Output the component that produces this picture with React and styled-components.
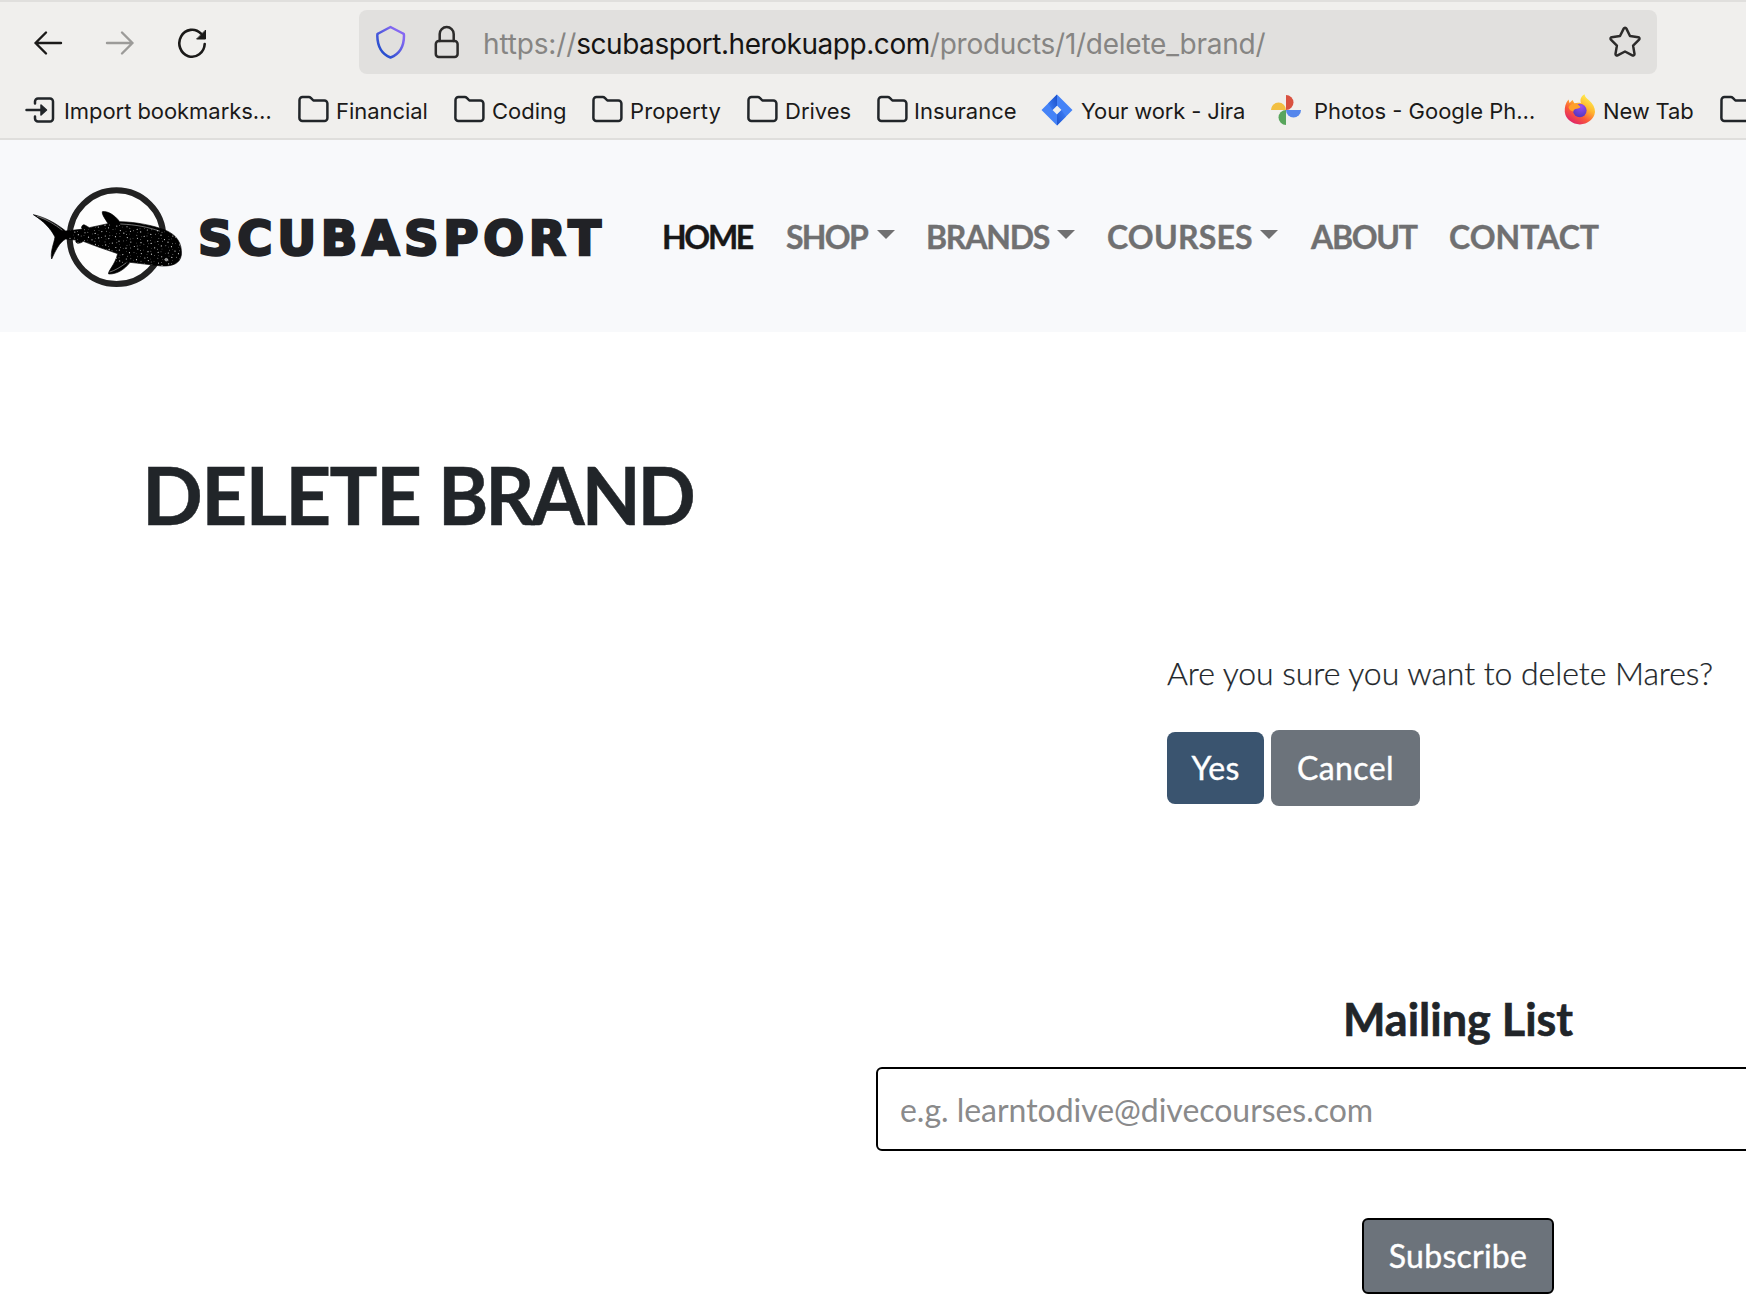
import React from 'react';
import styled, { createGlobalStyle } from 'styled-components';

const Global = createGlobalStyle`
  * { box-sizing: border-box; }
  html, body { margin: 0; padding: 0; background: #fff; overflow: hidden; }
`;

const brandFont = `Lato, "Liberation Sans", sans-serif`;
const uiFont = `Inter, "Liberation Sans", sans-serif`;

const Page = styled.div`
  width: 1746px;
  height: 1312px;
  overflow: hidden;
  background: #fff;
  color: #212529;
  font-family: ${brandFont};
`;

const Chrome = styled.header`
  height: 140px;
  background: #f0efed;
  border-top: 2px solid #e0dfdd;
  border-bottom: 2px solid #dfdedc;
  font-family: ${uiFont};
`;

const Toolbar = styled.div`
  display: flex;
  align-items: center;
  height: 80px;
  padding-left: 32px;
`;

const ToolButton = styled.button`
  display: flex;
  width: 72px;
  padding: 2px 0 0;
  border: 0;
  background: none;
  color: ${(p) => (p.$muted ? '#9c9b99' : '#1b1a19')};
`;

const AddressBar = styled.div`
  display: flex;
  align-items: center;
  width: 1298px;
  height: 64px;
  margin-left: 111px;
  padding: 0 14px;
  border-radius: 8px;
  background: #e1e0de;
`;

const AddressIcon = styled.span`
  display: flex;
  width: ${(p) => p.$w}px;
`;

const Address = styled.span`
  flex: 1;
  padding-top: 3px;
  font-size: 28px;
  line-height: 36px;
  letter-spacing: -0.25px;
  white-space: nowrap;
  color: #868583;
`;

const Scheme = styled.span`
  letter-spacing: -0.15px;
`;

const Domain = styled.span`
  letter-spacing: -0.45px;
  color: #151413;
`;

const Bookmarks = styled.div`
  display: flex;
  align-items: center;
  height: 56px;
  padding-left: 25px;
`;

const Bookmark = styled.div`
  display: flex;
  flex: none;
  align-items: center;
  width: ${(p) => p.$w}px;
`;

const BookmarkIcon = styled.span`
  display: flex;
  flex: none;
  width: ${(p) => p.$w}px;
`;

const BookmarkLabel = styled.span`
  padding-top: 2px;
  font-size: 22px;
  line-height: 28px;
  letter-spacing: ${(p) => p.$track}px;
  white-space: nowrap;
  color: #1b1a19;
`;

const Nav = styled.nav`
  display: flex;
  align-items: flex-start;
  height: 192px;
  padding: 35px 0 0 20px;
  background: #f8f9fb;
`;

const Mark = styled.div`
  display: flex;
  width: 178px;
`;

const Wordmark = styled.div`
  width: 464px;
  padding-top: 33px;
  font-family: "DejaVu Sans", sans-serif;
  font-weight: 700;
  font-size: 48px;
  line-height: 60px;
  letter-spacing: 4.7px;
  -webkit-text-stroke: 2.5px #212226;
  color: #212226;
`;

const NavItem = styled.a`
  display: flex;
  flex: none;
  width: ${(p) => p.$w}px;
  padding-top: 42px;
  font-weight: 700;
  font-size: 32px;
  line-height: 40px;
  letter-spacing: ${(p) => p.$track}px;
  white-space: nowrap;
  -webkit-text-stroke: 0.4px currentColor;
  color: ${(p) => (p.$active ? '#181818' : '#707071')};
`;

const NavLabel = styled.span`
  width: ${(p) => p.$w}px;
`;

const Caret = styled.span`
  width: 0;
  height: 0;
  margin-top: 13px;
  border: 9px solid transparent;
  border-top-color: currentColor;
  border-bottom: 0;
`;

const Main = styled.main`
  padding: 114px 0 0 142px;
`;

const Title = styled.h1`
  display: flex;
  margin: 0;
  font-weight: 700;
  font-size: 80px;
  line-height: 96px;
  -webkit-text-stroke: 0.5px currentColor;
`;

const TitleWord = styled.span`
  flex: none;
  width: ${(p) => p.$w}px;
  letter-spacing: ${(p) => p.$track}px;
  transform: scaleX(${(p) => p.$stretch || 1});
  transform-origin: left;
`;

const Confirm = styled.form`
  margin: 103px 0 0 1025px;
`;

const Question = styled.p`
  margin: 0;
  height: 85px;
  font-weight: 300;
  font-size: 32px;
  line-height: 56px;
  letter-spacing: -0.05px;
  -webkit-text-stroke: 0.25px currentColor;
  white-space: nowrap;
`;

const Actions = styled.div`
  display: flex;
  align-items: center;
  gap: 7px;
`;

const Button = styled.button`
  flex: none;
  width: ${(p) => p.$w}px;
  height: ${(p) => p.$h}px;
  padding: 0;
  border: ${(p) => (p.$outlined ? '2px solid #000' : '0')};
  border-radius: ${(p) => (p.$outlined ? 6 : 8)}px;
  background: ${(p) => (p.$primary ? '#3a546f' : '#6c737b')};
  color: #fff;
  font-family: ${brandFont};
  font-size: 32px;
  line-height: 40px;
  letter-spacing: ${(p) => p.$track}px;
  -webkit-text-stroke: 0.4px currentColor;
`;

const Mailing = styled.section`
  display: flex;
  flex-direction: column;
  align-items: center;
  width: 1164px;
  margin: 182px 0 0 734px;
`;

const MailingTitle = styled.h2`
  margin: 0;
  height: 79px;
  font-weight: 700;
  font-size: 45px;
  line-height: 62px;
  letter-spacing: 0;
  -webkit-text-stroke: 0.6px currentColor;
`;

const EmailInput = styled.input`
  width: 100%;
  height: 84px;
  margin-bottom: 67px;
  padding: 0 22px;
  border: 2px solid #000;
  border-radius: 6px;
  background: #fff;
  font-family: ${brandFont};
  font-size: 32px;
  letter-spacing: -0.03px;
  &::placeholder { color: #8a8a8b; opacity: 1; }
`;

const line = { fill: 'none', stroke: 'currentColor', strokeLinecap: 'round', strokeLinejoin: 'round' };

const ArrowLeft = () => (
  <svg width="32" height="32" viewBox="0 0 32 32" {...line} strokeWidth="2.4">
    <path d="M29 16H3.5M14 5.5 3.5 16 14 26.5" />
  </svg>
);

const ArrowRight = () => (
  <svg width="32" height="32" viewBox="0 0 32 32" {...line} strokeWidth="2.4">
    <path d="M3 16h25.500M18 5.500 28.500 16 18 26.500" />
  </svg>
);

const Reload = () => (
  <svg width="32" height="32" viewBox="0 0 32 32" {...line} strokeWidth="2.6">
    <path d="M28.700 17A12.700 13.500 0 1 1 25 6.700" />
    <path d="M29.500 3.500v8.500h-8.500Z" fill="currentColor" strokeWidth="1" />
  </svg>
);

const Shield = () => (
  <svg width="34" height="36" viewBox="0 0 34 36" {...line}>
    <defs>
      <linearGradient id="shield" x1="0" y1="1" x2="1" y2="0">
        <stop offset="0.2" stopColor="#2a50cf" />
        <stop offset="0.8" stopColor="#8568f2" />
      </linearGradient>
    </defs>
    <path stroke="url(#shield)" strokeWidth="2.500" d="M17.500 3 30 9.500a1.800 1.800 0 0 1 1 2C31 23 27 30 17.500 33.500 8 30 4.500 23 4.300 11.500a1.800 1.800 0 0 1 1-2Z" />
  </svg>
);

const Lock = () => (
  <svg width="28" height="36" viewBox="0 0 28 36" {...line} strokeWidth="2.500" color="#2c2b2a">
    <rect x="2.800" y="17" width="21.800" height="16" rx="3" />
    <path d="M6.700 17v-7a7 7 0 0 1 14 0v7" />
  </svg>
);

const Star = () => (
  <svg width="34" height="34" viewBox="0 0 34 34" {...line} strokeWidth="2.500" color="#2c2b2a">
    <path d="M15.700 3.600a1.500 1.500 0 0 1 2.700 0l3.600 7.400 8.300 1.200a1.500 1.500 0 0 1 .8 2.500l-6 5.900 1.400 8.300a1.500 1.500 0 0 1-2.200 1.500L17 26.500l-7.400 3.900a1.500 1.500 0 0 1-2.100-1.500l1.400-8.300-6-5.900a1.500 1.500 0 0 1 .8-2.500L12 11Z" />
  </svg>
);

const ImportIcon = () => (
  <svg width="30" height="28" viewBox="0 0 30 28" {...line} strokeWidth="2.500">
    <path d="M10 7.500V5.500a3 3 0 0 1 3-3h12a3 3 0 0 1 3 3v17a3 3 0 0 1-3 3H13a3 3 0 0 1-3-3v-2M1.500 14H16" />
    <path d="m16 9 5.500 5-5.500 5Z" fill="currentColor" strokeWidth="1.500" />
  </svg>
);

const Folder = () => (
  <svg width="32" height="30" viewBox="0 0 32 30" {...line} strokeWidth="2.500">
    <path d="M1.500 5a3 3 0 0 1 3-3h6.300a3 3 0 0 1 2 .8l2.600 2.700h11a3 3 0 0 1 3 3v14.500a3 3 0 0 1-3 3h-22a3 3 0 0 1-3-3Z" />
  </svg>
);

const Jira = () => (
  <svg width="32" height="32" viewBox="0 0 32 32">
    <defs>
      <linearGradient id="jiraTop" x1="1" y1="0.200" x2="0" y2="0.900">
        <stop offset="0" stopColor="#1d52cc" /><stop offset="1" stopColor="#3f80f7" />
      </linearGradient>
      <linearGradient id="jiraBottom" x1="0" y1="1" x2="1" y2="0.100">
        <stop offset="0" stopColor="#1d52cc" /><stop offset="1" stopColor="#3f80f7" />
      </linearGradient>
    </defs>
    <path fill="#4583f7" fillRule="evenodd" d="M16 .5 31.500 16 16 31.500.5 16ZM16 11.500 11.500 16l4.500 4.500 4.500-4.500Z" />
    <path fill="url(#jiraTop)" d="M16 .5v11L11.500 16 7 9.500Z" />
    <path fill="url(#jiraBottom)" d="M16 31.500v-11l4.500-4.500 4.500 6.500Z" />
  </svg>
);

const Photos = () => (
  <svg width="30" height="30" viewBox="0 0 30 30">
    <path fill="#d95140" d="M15 0a7.500 7.500 0 0 1 0 15Z" />
    <path fill="#5486ec" d="M30 15a7.500 7.500 0 0 1-15 0Z" />
    <path fill="#58a55c" d="M15 30a7.500 7.500 0 0 1 0-15Z" />
    <path fill="#f2bf42" d="M0 15a7.500 7.500 0 0 1 15 0Z" />
  </svg>
);

const Firefox = () => (
  <svg width="32" height="32" viewBox="0 0 32 32">
    <defs>
      <linearGradient id="fox" x1="0.850" y1="0.100" x2="0.250" y2="1">
        <stop offset="0" stopColor="#fff04f" /><stop offset="0.350" stopColor="#ffb52e" />
        <stop offset="0.650" stopColor="#fa5a39" /><stop offset="1" stopColor="#dd1d6e" />
      </linearGradient>
      <radialGradient id="globe" cx="0.600" cy="0.200" r="0.900">
        <stop offset="0" stopColor="#9a4df0" /><stop offset="1" stopColor="#4a35b8" />
      </radialGradient>
    </defs>
    <path fill="url(#fox)" d="M20.500 .3c.5 3 2.500 4 4.500 6 4 3.500 6 7 6 11.700A15.200 14 0 0 1 .8 18C.5 13 1.500 9 4.500 5.500l1 3.500L8.500 6l2 3.500c2-1 4-1 6.500-.5C15.500 5.500 17.500 2 20.500.3Z" />
    <circle cx="15.800" cy="16.500" r="6.800" fill="url(#globe)" />
    <path fill="#ffa02b" d="M4.500 13c2-3 5-4.300 9-3l3 3c-1.500 1.700-3.500 1.500-5 2-1.500.5-2 1.500-2 2.500C7 17 5 16 4.500 13Z" />
  </svg>
);

const whaleBody =
  'M40 119C80 128 112 148 137 168L184 163C184 151 190 147 196 151L208 158 264 146C258 134 245 120 247 110 262 107 284 120 299 140 350 141 400 152 432 164 470 178 487 205 484 240 480 266 458 274 425 273L330 262C315 282 292 298 266 297 262 290 286 268 293 236 258 224 225 213 190 199 178 208 164 206 168 195L137 192C118 202 106 228 95 252 90 230 102 206 105 186 92 160 70 138 40 119Z';

const spots = [];
for (let row = 0; row < 11; row += 1) {
  for (let col = 0; col < 32; col += 1) {
    const x = 150 + col * 10.5 + ((row * 7 + col * 3) % 5);
    const y = 134 + row * 10.5 + (x - 150) * 0.12 + ((row * 5 + col * 11) % 7) * 0.8;
    if ((row * 3 + col * 5) % 6 !== 0) spots.push([x, y, 0.9 + ((row + col * 2) % 3) * 0.45]);
  }
}

const WhaleShark = () => (
  <svg width="175" height="120" viewBox="0 0 525 360">
    <defs><clipPath id="body"><path d={whaleBody} /></clipPath></defs>
    <circle cx="289.500" cy="186.500" r="140.500" fill="#fdfdfd" stroke="#222" strokeWidth="18" />
    <path d={whaleBody} fill="#000" stroke="#000" strokeWidth="2" strokeLinejoin="round" />
    <g clipPath="url(#body)" fill="#d8d8d8">
      {spots.map(([x, y, r], i) => <circle key={i} cx={x} cy={y} r={r} />)}
    </g>
    <g fill="none" stroke="#bbb" strokeWidth="1.800" strokeLinecap="round">
      <path d="M302 147c48 2 84 10 116 21M52 124c28 9 54 25 74 41M270 291c14-4 34-16 48-27" />
      <circle cx="439" cy="254" r="4" fill="#888" />
    </g>
  </svg>
);

const bookmarks = [
  { Icon: ImportIcon, label: 'Import bookmarks…', w: 273, iw: 39, track: -0.06 },
  { Icon: Folder, label: 'Financial', w: 156, iw: 38, track: -0.05 },
  { Icon: Folder, label: 'Coding', w: 138, iw: 38, track: 0 },
  { Icon: Folder, label: 'Property', w: 155, iw: 38, track: 0.1 },
  { Icon: Folder, label: 'Drives', w: 130, iw: 38, track: 0 },
  { Icon: Folder, label: 'Insurance', w: 164, iw: 37, track: 0 },
  { Icon: Jira, label: 'Your work - Jira', w: 230, iw: 40, track: -0.14 },
  { Icon: Photos, label: 'Photos - Google Ph…', w: 293, iw: 43, track: 0 },
  { Icon: Firefox, label: 'New Tab', w: 156, iw: 39, track: -0.15 },
  { Icon: Folder, label: '', w: 60, iw: 39, track: 0 },
];

const links = [
  { label: 'HOME', w: 124, active: true, track: -2.3 },
  { label: 'SHOP', w: 140, caret: 91, track: -1.7 },
  { label: 'BRANDS', w: 181, caret: 131, track: -1.2 },
  { label: 'COURSES', w: 204, caret: 153, track: 0.2 },
  { label: 'ABOUT', w: 138, track: -1.3 },
  { label: 'CONTACT', w: 160, track: 0 },
];

export default function App() {
  return (
    <Page>
      <Global />
      <Chrome>
        <Toolbar>
          <ToolButton aria-label="Back"><ArrowLeft /></ToolButton>
          <ToolButton aria-label="Forward" $muted><ArrowRight /></ToolButton>
          <ToolButton aria-label="Reload"><Reload /></ToolButton>
          <AddressBar>
            <AddressIcon $w={60}><Shield /></AddressIcon>
            <AddressIcon $w={50}><Lock /></AddressIcon>
            <Address>
              <Scheme>https://</Scheme><Domain>scubasport.herokuapp.com</Domain>/products/1/delete_brand/
            </Address>
            <AddressIcon $w={35}><Star /></AddressIcon>
          </AddressBar>
        </Toolbar>
        <Bookmarks>
          {bookmarks.map(({ Icon, label, w, iw, track }, i) => (
            <Bookmark key={i} $w={w}>
              <BookmarkIcon $w={iw}><Icon /></BookmarkIcon>
              <BookmarkLabel $track={track}>{label}</BookmarkLabel>
            </Bookmark>
          ))}
        </Bookmarks>
      </Chrome>
      <Nav>
        <Mark><WhaleShark /></Mark>
        <Wordmark>SCUBASPORT</Wordmark>
        {links.map((l) => (
          <NavItem key={l.label} $w={l.w} $active={l.active} $track={l.track}>
            {l.caret ? <><NavLabel $w={l.caret}>{l.label}</NavLabel><Caret /></> : l.label}
          </NavItem>
        ))}
      </Nav>
      <Main>
        <Title>
          <TitleWord $w={296} $track={-1.7}>DELETE</TitleWord>{' '}
          <TitleWord $w={260} $track={-3.2} $stretch={0.957}>BRAND</TitleWord>
        </Title>
        <Confirm onSubmit={(e) => e.preventDefault()}>
          <Question>Are you sure you want to delete Mares?</Question>
          <Actions>
            <Button type="button" $primary $w={97} $h={72} $track={0.3}>Yes</Button>
            <Button type="button" $w={149} $h={76} $track={0.4}>Cancel</Button>
          </Actions>
        </Confirm>
        <Mailing>
          <MailingTitle>Mailing List</MailingTitle>
          <EmailInput type="email" placeholder="e.g. learntodive@divecourses.com" />
          <Button type="button" $outlined $w={192} $h={76} $track={0.25}>Subscribe</Button>
        </Mailing>
      </Main>
    </Page>
  );
}
